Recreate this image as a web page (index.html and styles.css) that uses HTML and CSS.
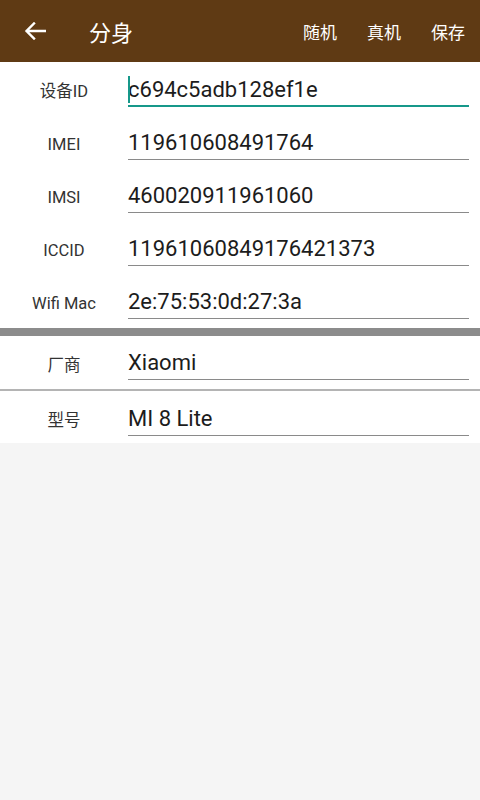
FILE: index.html
```html
<!DOCTYPE html>
<html lang="zh-CN">
<head>
  <meta charset="UTF-8" />
  <meta name="viewport" content="width=device-width, initial-scale=1.0"/>
  <title>分身</title>
  <link rel="stylesheet" href="styles.css">
</head>
<body>
  <header class="toolbar">
    <button class="back" aria-label="返回">
      <svg width="22" height="18" viewBox="0 0 22 18">
        <path d="M21 9H3M10 1.5L2.5 9L10 16.5" fill="none" stroke="#fff" stroke-width="2.4" stroke-linecap="square"/>
      </svg>
    </button>
    <h1 class="title">分身</h1>
    <nav class="actions">
      <span>随机</span>
      <span>真机</span>
      <span>保存</span>
    </nav>
  </header>

  <main class="form">
    <section class="group">
      <div class="row">
        <label class="label">设备ID</label>
        <div class="field focused"><span class="cursor"></span>c694c5adb128ef1e</div>
      </div>
      <div class="row">
        <label class="label">IMEI</label>
        <div class="field">119610608491764</div>
      </div>
      <div class="row">
        <label class="label">IMSI</label>
        <div class="field">460020911961060</div>
      </div>
      <div class="row">
        <label class="label">ICCID</label>
        <div class="field">11961060849176421373</div>
      </div>
      <div class="row">
        <label class="label">Wifi Mac</label>
        <div class="field">2e:75:53:0d:27:3a</div>
      </div>
    </section>

    <div class="separator"></div>

    <section class="group">
      <div class="row">
        <label class="label">厂商</label>
        <div class="field">Xiaomi</div>
      </div>
      <div class="row divided">
        <label class="label">型号</label>
        <div class="field">MI 8 Lite</div>
      </div>
    </section>
  </main>
</body>
</html>
```

FILE: styles.css
```css
* { box-sizing: border-box; }

body {
  margin: 0;
  background: #f5f5f5;
  font-family: Roboto, "Noto Sans CJK SC", sans-serif;
  color: #222;
}

.toolbar {
  height: 62px;
  display: flex;
  align-items: center;
  background: #5f3a14;
  color: #fff;
}

.back {
  border: none;
  background: none;
  padding: 0;
  margin-left: 24px;
  width: 22px;
  height: 18px;
  display: flex;
}

.title {
  margin: 0 0 0 43px;
  font-size: 22px;
  font-weight: normal;
  font-family: "Noto Sans CJK SC", sans-serif;
}

.actions {
  margin-left: auto;
  display: flex;
  gap: 30px;
  padding-right: 15px;
  font-size: 17px;
  font-family: "Noto Sans CJK SC", sans-serif;
}

.form {
  background: #fff;
}

.row {
  display: flex;
  height: 53px;
}

.row.divided {
  height: 54px;
  border-top: 2px solid #b4b4b4;
}

.label {
  width: 128px;
  padding-top: 19px;
  line-height: 22px;
  text-align: center;
  font-size: 16.5px;
  color: #333;
  font-family: Roboto, "Noto Sans CJK SC", sans-serif;
}

.field {
  position: relative;
  flex: 1;
  margin-right: 11px;
  height: 45px;
  padding-top: 15px;
  font-size: 22px;
  line-height: 26px;
  color: #1c1c1c;
  border-bottom: 1px solid #8a8a8a;
}

.group + .separator + .group .row:first-child .field {
  height: 44px;
  padding-top: 14px;
}

.field.focused {
  border-bottom: 2px solid #16988a;
}

.cursor {
  position: absolute;
  left: 0;
  top: 14px;
  width: 2px;
  height: 27px;
  background: #16988a;
}

.separator {
  height: 8px;
  margin-top: 1px;
  background: #8c8c8c;
}
```
